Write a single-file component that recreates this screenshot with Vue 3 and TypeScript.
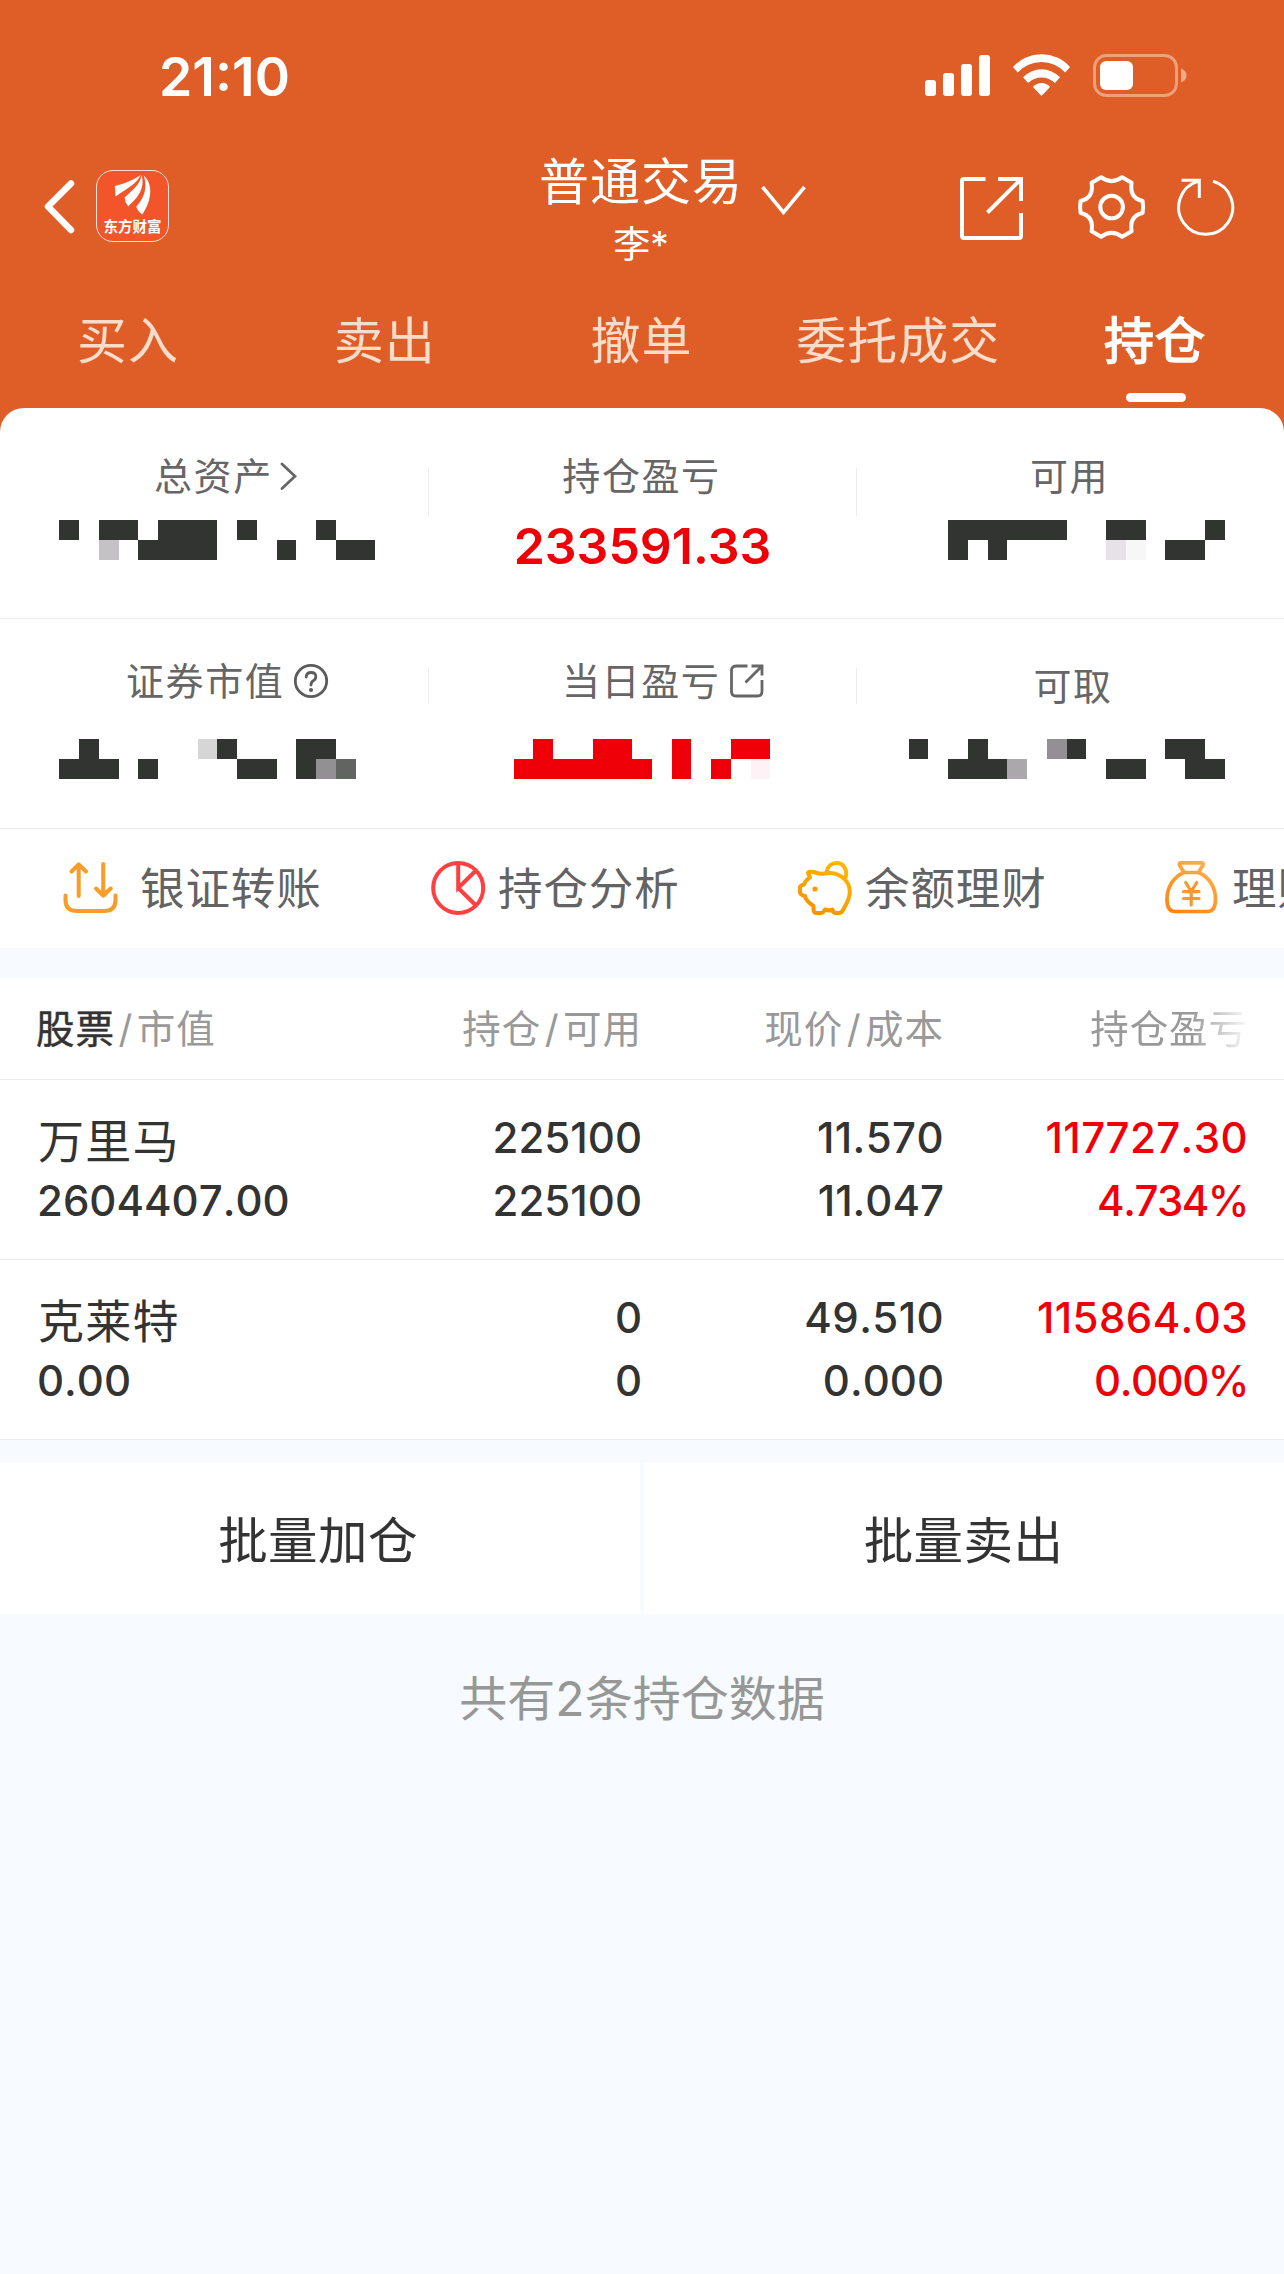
<script setup lang="ts">
type Block = [x: number, row: number, width: number, color?: string]

interface Holding {
  name: string
  value: string
  held: string
  usable: string
  price: string
  cost: string
  profit: string
  ratio: string
}

const tabs = ['买入', '卖出', '撤单', '委托成交', '持仓']
const activeTab = '持仓'

// Privacy mosaics: horizontal runs of blocks laid out on two rows.
const totalMask: Block[] = [
  [0, 0, 20], [40, 0, 39], [99, 0, 59], [178, 0, 20], [257, 0, 20],
  [40, 1, 20, '#c4c2c5'], [79, 1, 79], [218, 1, 19], [277, 1, 39],
]
const usableMask: Block[] = [
  [39, 0, 119], [197, 0, 40], [296, 0, 20],
  [39, 1, 20], [79, 1, 19], [197, 1, 20, '#e7e2e7'], [217, 1, 20, '#f7f7f7'], [256, 1, 40],
]
const marketMask: Block[] = [
  [20, 0, 20], [139, 0, 19, '#d6d6d6'], [158, 0, 20], [237, 0, 40],
  [0, 1, 60], [79, 1, 20], [178, 1, 40], [237, 1, 20], [257, 1, 20, '#939093'], [277, 1, 20, '#616461'],
]
const todayMask: Block[] = [
  [19, 0, 20], [79, 0, 39], [158, 0, 19], [217, 0, 39],
  [0, 1, 138], [158, 1, 19], [197, 1, 20], [237, 1, 19, '#fff2f6'],
]
const cashMask: Block[] = [
  [0, 0, 19], [59, 0, 20], [138, 0, 20, '#939093'], [158, 0, 19], [256, 0, 40],
  [39, 1, 59], [98, 1, 20, '#aaa8ab'], [197, 1, 40], [276, 1, 40],
]

const holdings: Holding[] = [
  { name: '万里马', value: '2604407.00', held: '225100', usable: '225100', price: '11.570', cost: '11.047', profit: '117727.30', ratio: '4.734%' },
  { name: '克莱特', value: '0.00', held: '0', usable: '0', price: '49.510', cost: '0.000', profit: '115864.03', ratio: '0.000%' },
]
</script>

<template>
  <div class="page">
    <header class="top">
      <div class="status">
        <span class="time">21:10</span>
        <svg class="status-icons" width="265" height="50" viewBox="923 50 265 50">
          <g fill="#fff">
            <rect x="925" y="80" width="11" height="16" rx="3" />
            <rect x="943" y="73" width="11" height="23" rx="3" />
            <rect x="961" y="64" width="11" height="32" rx="3" />
            <rect x="979" y="55" width="11" height="41" rx="3" />
            <path d="M1013 67A38 38 0 0 1 1070 67L1065.3 72.6A32 32 0 0 0 1017.7 72.6Z" />
            <path d="M1023 77.3A25.4 25.4 0 0 1 1060 77.3L1055 83A19.3 19.3 0 0 0 1028 83Z" />
            <path d="M1033 87A11.2 11.2 0 0 1 1050 87L1041.5 96Z" />
            <rect x="1100" y="61" width="33" height="29" rx="6" />
          </g>
          <rect x="1094.5" y="55.500" width="82" height="40" rx="12" fill="none" stroke="#eda07a" stroke-width="3" />
          <path d="M1181 68.500Q1186.500 70.500 1186.500 75.500T1181 82.500Z" fill="#f0ab89" />
        </svg>
      </div>

      <div class="nav">
        <svg class="back" width="36" height="60" viewBox="42 176 36 60">
          <path d="M71 183.500L48 206.500L71 230" fill="none" stroke="#fff" stroke-width="6.500" stroke-linecap="round" stroke-linejoin="round" />
        </svg>
        <div class="logo">
          <svg width="40" height="42" viewBox="111 175 40 42">
            <path d="M112.800 187C120 185.500 132 181 138.800 176C135 184.500 124 190.500 113.600 197.400Z" fill="#fff" />
            <path d="M139.600 176.300C138 186 129 192.500 122.600 198.600Q122.800 203.500 126.200 207.400C135 199.500 143.500 190 139.600 176.300Z" fill="#fff" />
            <path d="M141.600 176.300C146.500 190 140.500 201 134.300 207.600Q135.500 212.500 140.300 215.400C148.500 203.500 152.500 186 141.600 176.300Z" fill="#fff" />
          </svg>
          <span>东方财富</span>
        </div>
        <div class="account">
          <div class="account-name">普通交易</div>
          <div class="account-user">李*</div>
        </div>
        <svg class="drop" width="50" height="34" viewBox="759 183 50 34">
          <path d="M762.500 187L783.500 212.500L804.500 187" fill="none" stroke="#fff" stroke-width="3.600" />
        </svg>
        <svg class="tools" width="280" height="70" viewBox="957 172 280 70" fill="none" stroke="#fff" stroke-width="4">
          <path d="M985.500 179H964Q962 179 962 181V236Q962 238 964 238H1019Q1021 238 1021 236V213M998 179H1021V201M1020 180L987.500 212.500" />
          <g transform="translate(1111.600 207)" stroke-linejoin="round">
            <path d="M-10.500 -29.800Q0 -22 10.500 -29.800L20 -24.200Q17.500 -9 31 -6Q32 0 31 6Q17.500 9 20 24.200L10.500 29.800Q0 22 -10.500 29.800L-20 24.200Q-17.500 9 -31 6Q-32 0 -31 -6Q-17.500 -9 -20 -24.200Z" />
            <circle r="11.300" />
          </g>
          <path d="M1213 181.300A27 27 0 1 1 1198 181.400M1181.500 180.200H1199.300V198" stroke-width="3" />
        </svg>
      </div>

      <nav class="tabs">
        <div v-for="tab in tabs" :key="tab" class="tab" :class="{ active: tab === activeTab }">
          <span>{{ tab }}</span>
          <i v-if="tab === activeTab" class="underline"></i>
        </div>
      </nav>
    </header>

    <main>
      <section class="assets">
        <div class="asset-row first">
          <div class="asset">
            <div class="label total">
              总资产
              <svg width="18" height="30" viewBox="279 462 18 30">
                <path d="M282 465L295 477.300L282 489.500" fill="none" stroke="#666" stroke-width="2.800" stroke-linecap="round" />
              </svg>
            </div>
            <svg class="mask left" width="316" height="40" shape-rendering="crispEdges">
              <rect v-for="(b, i) in totalMask" :key="i" :x="b[0]" :y="b[1] * 20" :width="b[2]" height="20" :fill="b[3] ?? '#323431'" />
            </svg>
          </div>
          <i class="split"></i>
          <div class="asset">
            <div class="label profit">持仓盈亏</div>
            <div class="amount">233591.33</div>
          </div>
          <i class="split"></i>
          <div class="asset">
            <div class="label profit">可用</div>
            <svg class="mask right" width="316" height="40" shape-rendering="crispEdges">
              <rect v-for="(b, i) in usableMask" :key="i" :x="b[0]" :y="b[1] * 20" :width="b[2]" height="20" :fill="b[3] ?? '#323431'" />
            </svg>
          </div>
        </div>

        <div class="asset-row second">
          <div class="asset">
            <div class="label market">
              证券市值
              <svg width="36" height="36" viewBox="-18 -18 36 36" fill="none" stroke="#5c5c5c" stroke-width="2.800">
                <circle r="15.700" />
                <path d="M-4.800 -4Q-4.500 -8.500 0 -8.500Q4.800 -8.500 4.800 -4.200Q4.800 -1.500 2.200 -0.200Q0 1 0 4" stroke-linecap="round" />
                <circle cy="9" r="2.100" fill="#5c5c5c" stroke="none" />
              </svg>
            </div>
            <svg class="mask left" width="316" height="40" shape-rendering="crispEdges">
              <rect v-for="(b, i) in marketMask" :key="i" :x="b[0]" :y="b[1] * 20" :width="b[2]" height="20" :fill="b[3] ?? '#323431'" />
            </svg>
          </div>
          <i class="split"></i>
          <div class="asset">
            <div class="label today">
              当日盈亏
              <svg width="36" height="36" viewBox="0 0 36 36" fill="none" stroke="#666" stroke-width="2.800">
                <path d="M18.500 3H7Q2.500 3 2.500 7.500V28.500Q2.500 33 7 33H28.500Q33 33 33 28.500V17M22.500 3H33V12.500M32.500 3.500L16.500 19.500" />
              </svg>
            </div>
            <svg class="mask mid" width="316" height="40" shape-rendering="crispEdges">
              <rect v-for="(b, i) in todayMask" :key="i" :x="b[0]" :y="b[1] * 20" :width="b[2]" height="20" :fill="b[3] ?? '#ef0008'" />
            </svg>
          </div>
          <i class="split"></i>
          <div class="asset">
            <div class="label cash">可取</div>
            <svg class="mask right" width="316" height="40" shape-rendering="crispEdges">
              <rect v-for="(b, i) in cashMask" :key="i" :x="b[0]" :y="b[1] * 20" :width="b[2]" height="20" :fill="b[3] ?? '#323431'" />
            </svg>
          </div>
        </div>
      </section>

      <section class="quick">
        <div class="quick-item transfer">
          <svg width="60" height="60" viewBox="61 858 60 60" fill="none" stroke="#fb9c28" stroke-width="4" stroke-linecap="round" stroke-linejoin="round">
            <path d="M65.500 895.500V900Q65.500 911 77 911H104Q115.500 911 115.500 900V895.500M78.700 896V864.500M71.500 871.500L78.700 864.300L86 871.500M103.200 864V895.500M96 888.500L103.200 895.700L110.700 888.500" />
          </svg>
          <span>银证转账</span>
        </div>
        <div class="quick-item">
          <svg width="60" height="60" viewBox="428 858 60 60" fill="none" stroke="#ff4040" stroke-width="4">
            <circle cx="458.200" cy="888" r="25" />
            <path d="M458.200 863V888L476 870.500M458.200 888L476 905.500" />
          </svg>
          <span>持仓分析</span>
        </div>
        <div class="quick-item">
          <svg width="60" height="60" viewBox="794.500 858 60 60" fill="none" stroke="url(#pig)" stroke-width="4" stroke-linejoin="round">
            <defs>
              <linearGradient id="pig" gradientUnits="userSpaceOnUse" x1="840" y1="862" x2="812" y2="914">
                <stop offset="0" stop-color="#ffb800" />
                <stop offset="1" stop-color="#fb8f00" />
              </linearGradient>
            </defs>
            <path d="M807.500 873Q808 871 813 872Q820 874.500 824 873.500C838 871 849.500 880 849.300 892C849.200 900 845 905 842.500 910Q841 913 838.500 913H835Q832.500 913 832 909.500L829 910.500L824.500 909.500Q823 913 820 913H816Q813.500 913 813 910V906Q805 900.500 804.500 896Q799.500 895 799.500 892V887.500Q799.500 885.500 803.500 884.500Q805.500 879.500 809.500 877.500Z" />
            <path d="M825.800 872.500C827 866 831.500 863 836 863C843 863 847.500 870 845 878" />
            <circle cx="814.500" cy="889" r="2.600" fill="#fb9a00" stroke="none" />
          </svg>
          <span>余额理财</span>
        </div>
        <div class="quick-item">
          <svg width="60" height="60" viewBox="1162 858 60 60" fill="none" stroke="url(#bag)" stroke-width="4" stroke-linecap="round" stroke-linejoin="round">
            <defs>
              <linearGradient id="bag" gradientUnits="userSpaceOnUse" x1="1205" y1="862" x2="1175" y2="914">
                <stop offset="0" stop-color="#ffae4c" />
                <stop offset="1" stop-color="#ff8412" />
              </linearGradient>
            </defs>
            <path d="M1184 872.500C1173 877 1167 888 1167 899Q1167 911.500 1175 911.500H1207.500Q1215.500 911.500 1215.500 899C1215.500 888 1209.500 877 1198.500 872.500ZM1184 872.500L1179.500 865Q1179 862.800 1181 862.800H1201.500Q1203.800 862.800 1203 865L1198.500 872.500" stroke-width="3.700" />
            <path d="M1185.700 882.500L1191.200 891.500L1196.700 882.500M1191.200 891.500V905M1183.500 891.700H1199M1183.500 898.500H1199" stroke-width="3.200" stroke="#ff962c" />
          </svg>
          <span>理财</span>
        </div>
      </section>

      <section class="table">
        <div class="row head">
          <div><b>股票</b><em>/</em>市值</div>
          <div>持仓<em>/</em>可用</div>
          <div>现价<em>/</em>成本</div>
          <div class="fade">持仓盈亏</div>
        </div>
        <div v-for="h in holdings" :key="h.name" class="row">
          <div><p class="name">{{ h.name }}</p><p>{{ h.value }}</p></div>
          <div><p>{{ h.held }}</p><p>{{ h.usable }}</p></div>
          <div><p>{{ h.price }}</p><p>{{ h.cost }}</p></div>
          <div class="gain"><p>{{ h.profit }}</p><p class="ratio">{{ h.ratio }}</p></div>
        </div>
      </section>

      <section class="batch">
        <button type="button">批量加仓</button>
        <button type="button">批量卖出</button>
      </section>
      <p class="summary">共有2条持仓数据</p>
    </main>
  </div>
</template>

<style>
body {
  margin: 0;
  background: #f7faff;
}
</style>

<style scoped>
.page {
  width: 1284px;
  height: 2274px;
  overflow: hidden;
  background: #f7faff;
  color: #333432;
  font-family: Inter, "Noto Sans CJK SC", sans-serif;
}
svg {
  display: block;
  flex: none;
}
p {
  margin: 0;
}
.top {
  height: 408px;
  background: #df5e28;
  color: #fff;
}
.status {
  display: flex;
  height: 125px;
}
.time {
  width: 764px;
  padding-left: 159px;
  margin-top: 47px;
  font-size: 53.500px;
  line-height: 60px;
  font-weight: 600;
}
.status-icons {
  margin-top: 50px;
}
.nav {
  display: flex;
  height: 160px;
}
.back {
  margin: 51px 18px 0 42px;
}
.logo {
  box-sizing: border-box;
  display: flex;
  flex-direction: column;
  align-items: center;
  width: 73px;
  height: 72px;
  margin-top: 45px;
  padding-top: 3px;
  border: 1.5px solid #fde3d8;
  border-radius: 17px;
  background: #f15529;
}
.logo span {
  margin-top: 3px;
  font-size: 14.500px;
  line-height: 16px;
  font-weight: 700;
  white-space: nowrap;
}
.account {
  width: 206px;
  margin: 27px 0 0 369px;
  text-align: center;
  white-space: nowrap;
}
.account-name {
  font-size: 50px;
  line-height: 61px;
  letter-spacing: 1px;
}
.account-user {
  margin-top: 7px;
  font-size: 37px;
  line-height: 50px;
}
.drop {
  margin: 58px 0 0 15px;
}
.tools {
  margin: 47px 0 0 148px;
}
.tabs {
  display: grid;
  grid-template-columns: repeat(5, 1fr);
  height: 123px;
}
.tab {
  display: flex;
  flex-direction: column;
  align-items: center;
  padding-top: 26px;
  font-size: 50px;
  line-height: 61px;
  letter-spacing: 1px;
  color: #f9dcca;
}
.tab span {
  margin-left: -1px;
}
.tab.active {
  color: #fff;
  -webkit-text-stroke: 1.600px #fff;
}
.underline {
  width: 60px;
  height: 9px;
  margin: 21px 0 0 1px;
  border-radius: 5px;
  background: #fff;
}
main {
  background: linear-gradient(#df5e28 30px, transparent 30px);
}
.assets {
  border-radius: 24px 24px 0 0;
  background: #fff;
}
.asset-row {
  display: flex;
  box-sizing: border-box;
  border-bottom: 1px solid #ececec;
}
.asset-row.first {
  height: 211px;
  padding-top: 43px;
}
.asset-row.second {
  height: 210px;
  padding-top: 37px;
}
.asset {
  display: flex;
  flex-direction: column;
  flex: none;
  width: 427px;
}
.asset:first-child {
  width: 428px;
}
.label {
  display: flex;
  align-items: center;
  justify-content: center;
  height: 50px;
  font-size: 38px;
  letter-spacing: 1.600px;
  line-height: 50px;
  color: #666;
}
.label.total {
  justify-content: flex-start;
  gap: 6px;
  padding-left: 154px;
}
.label.profit {
  padding-right: 2px;
}
.label.market {
  justify-content: flex-start;
  gap: 9px;
  padding-left: 126px;
}
.label.today {
  justify-content: flex-start;
  gap: 9px;
  padding-left: 133px;
}
.label.cash {
  height: 60px;
  padding-left: 5px;
  margin-bottom: -10px;
}
.amount {
  margin-top: 15px;
  font-size: 50px;
  line-height: 60px;
  font-weight: 600;
  color: #ef0008;
  text-align: center;
}
.mask {
  margin-top: 19px;
}
.second .mask {
  margin-top: 33px;
}
.mask.left {
  margin-left: 59px;
}
.mask.mid {
  margin-left: 85px;
}
.mask.right {
  margin-left: 52px;
}
.split {
  width: 1px;
  height: 48px;
  margin-top: 17px;
  background: #ededed;
}
.second .split {
  height: 36px;
  margin-top: 12px;
}
.quick {
  display: flex;
  box-sizing: border-box;
  height: 119px;
  padding: 0 0 2px 61px;
  background: #fff;
  overflow: hidden;
}
.quick-item {
  display: flex;
  align-items: center;
  flex: none;
  width: 367px;
  font-size: 44.500px;
  letter-spacing: 0.900px;
  color: #636363;
  white-space: nowrap;
}
.quick-item span {
  padding-bottom: 5px;
  margin-left: 10px;
}
.quick-item.transfer span {
  margin-left: 19px;
}
.table {
  margin-top: 30px;
  background: #fff;
}
.row {
  display: grid;
  box-sizing: border-box;
  grid-template-columns: 337px 267px 302px 304px;
  height: 180px;
  padding: 33px 37px 0;
  border-bottom: 1px solid #ececec;
  font-size: 42px;
  font-weight: 550;
  font-kerning: none;
  line-height: 50px;
  text-align: right;
}
.row p + p {
  margin-top: 13px;
}
.row > div:first-child {
  text-align: left;
}
.row > div:nth-child(n + 2) {
  margin-right: -1px;
}
.row > div:nth-child(3) p:first-child,
.gain p:first-child {
  letter-spacing: 0.400px;
}
.row .name {
  padding: 3px 0 0 1px;
  margin-bottom: -3px;
  font-size: 46px;
  font-weight: 400;
  letter-spacing: 1.300px;
}
.row .ratio {
  letter-spacing: -1.500px;
}
.row.head {
  height: 102px;
  padding-top: 26px;
  font-size: 38.500px;
  font-weight: 400;
  letter-spacing: 0.950px;
  color: #999;
}
.head > div:first-child {
  margin-left: -1px;
}
.head b {
  font-weight: 400;
  color: #333;
  -webkit-text-stroke: 0.500px #333;
}
.head em {
  padding: 0 3.500px;
  font-style: normal;
}
.fade {
  mask-image: linear-gradient(90deg, #000 248px, transparent 308px);
}
.gain {
  color: #ef0008;
}
.batch {
  display: grid;
  grid-template-columns: 1fr 1fr;
  gap: 4px;
  margin-top: 23px;
}
.batch button {
  height: 151px;
  padding: 5px 4px 0 0;
  border: 0;
  background: #fff;
  color: #333;
  font: 49.500px/60px Inter, "Noto Sans CJK SC", sans-serif;
  letter-spacing: 0.400px;
}
.batch button + button {
  padding-right: 1px;
}
.summary {
  margin-top: 55px;
  font-size: 48px;
  line-height: 60px;
  color: #969896;
  text-align: center;
}
</style>
